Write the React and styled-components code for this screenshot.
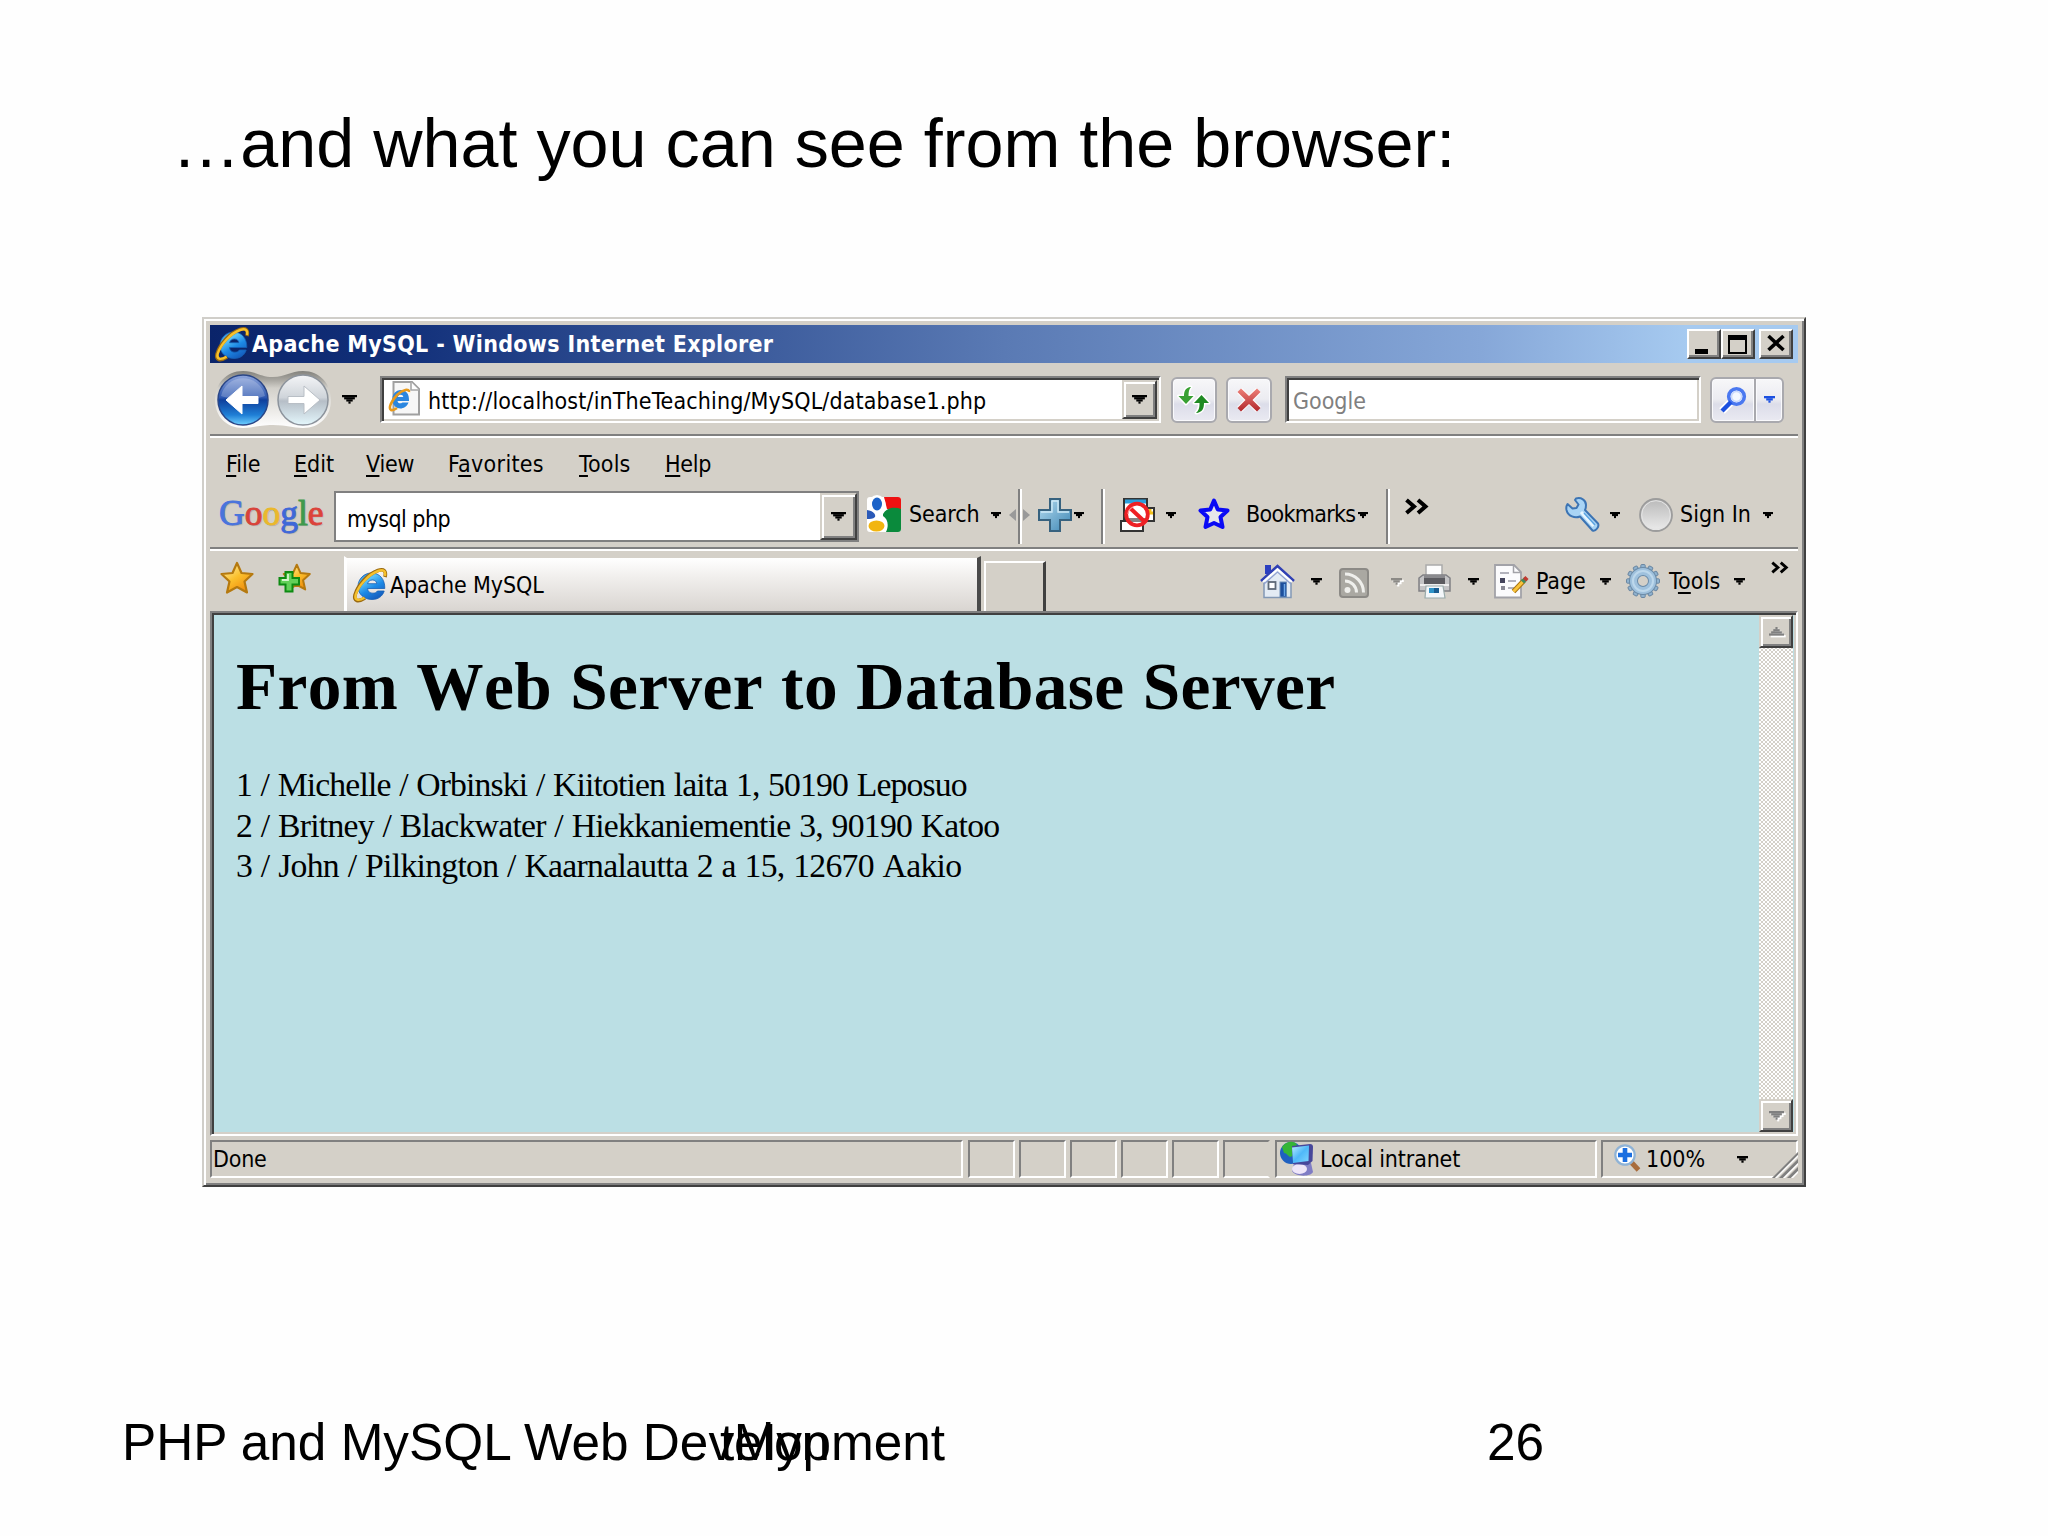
import React from "react";
import styled, { createGlobalStyle, css } from "styled-components";

const face = "#d4d0c8";
const shadow = "#808080";
const dark = "#404040";

const Global = createGlobalStyle`
  *, *::before, *::after { box-sizing: border-box; }
  body { margin: 0; background: #fff; color: #000; }
`;

/* ---------- slide ---------- */

const Slide = styled.div`
  display: flex;
  flex-direction: column;
  width: 2048px;
  height: 1536px;
  overflow: hidden;
  background: #fefefe;
`;

const SlideTitle = styled.h2`
  flex: none;
  height: 317px;
  margin: 0;
  padding: 103px 0 0 172px;
  font: 400 68.3px/80px "Liberation Sans", Arial, sans-serif;
  white-space: nowrap;
`;

const SlideFooter = styled.footer`
  display: flex;
  margin-top: 226px;
  padding-left: 122px;
  font: 51.3px/60px "Liberation Sans", Arial, sans-serif;
  white-space: nowrap;
`;

const FooterSlot = styled.span`
  flex: none;
  width: ${(p) => p.$w}px;
  letter-spacing: ${(p) => p.$ls || 0}px;
`;

/* ---------- window ---------- */

const Window = styled.section`
  flex: none;
  display: flex;
  flex-direction: column;
  width: 1604px;
  height: 870px;
  margin-left: 202px;
  padding: 6px 6px 3px;
  background: ${face};
  border: 2px solid;
  border-color: #d0cec9 ${dark} ${dark} #d0cec9;
  box-shadow: inset 2px 2px #fff, inset -2px -2px ${shadow};
  font: 23px/27px "DejaVu Sans Condensed", "DejaVu Sans", Tahoma, sans-serif;
`;

const Label = styled.span`
  flex: none;
  width: ${(p) => p.$w}px;
  margin-left: ${(p) => p.$ml || 0}px;
  letter-spacing: ${(p) => p.$ls || 0}px;
  white-space: nowrap;
  u {
    text-decoration-thickness: 2px;
    text-underline-offset: 3px;
    text-decoration-skip-ink: none;
  }
`;

const Svg = styled.svg`
  flex: none;
  display: block;
  margin-left: ${(p) => p.$ml || 0}px;
  margin-top: ${(p) => p.$mt || 0}px;
  overflow: visible;
`;

const raised = css`
  background: ${face};
  border: 2px solid;
  border-color: ${face} ${dark} ${dark} ${face};
  box-shadow: inset 2px 2px #fff, inset -2px -2px ${shadow};
`;

const sunken = css`
  background: #fff;
  border: 2px solid;
  border-color: ${shadow} #fff #fff ${shadow};
  box-shadow: inset 2px 2px ${dark}, inset -2px -2px ${face};
`;

const TitleBar = styled.header`
  flex: none;
  display: flex;
  align-items: center;
  height: 38px;
  padding: 0 5px 0 5px;
  background: linear-gradient(90deg, #0a246a 0%, #12307a 12%, #5a7ab4 50%, #86a7d8 80%, #a6caf0 93%);
  color: #fff;
  font-weight: 700;
`;

const Caption = styled.span`
  flex: 1;
  margin-left: 3px;
  letter-spacing: 0.32px;
  white-space: nowrap;
`;

const CaptionButton = styled.button`
  display: grid;
  place-items: center;
  width: 34px;
  height: 30px;
  margin-left: ${(p) => p.$ml || 0}px;
  padding: 0;
  background: ${face};
  border: 2px solid;
  border-color: #fff ${dark} ${dark} #fff;
  box-shadow: inset -2px -2px ${shadow};
`;

const NavRow = styled.div`
  flex: none;
  display: flex;
  align-items: center;
  height: 71px;
  padding-top: 2px;
`;

const Groove = styled.div`
  flex: none;
  height: 4px;
  background: linear-gradient(${shadow} 50%, #fff 50%);
`;

const Address = styled.div`
  ${sunken}
  display: flex;
  align-items: center;
  width: 781px;
  height: 47px;
  margin-left: 23px;
  padding: 2px;
`;

const UrlText = styled(Label)`
  flex: 1;
  padding-top: 3px;
`;

const DropButton = styled.button`
  ${raised}
  flex: none;
  display: grid;
  place-items: center;
  width: ${(p) => p.$w}px;
  height: ${(p) => p.$h}px;
  margin-left: auto;
  padding: 0;
`;

const GlassButton = styled.button`
  flex: none;
  display: grid;
  place-items: center;
  width: ${(p) => p.$w}px;
  height: 46px;
  margin-left: ${(p) => p.$ml || 0}px;
  padding: 0;
  border: 2px solid #a9a9ae;
  border-radius: ${(p) => p.$r || "6px"};
  background: linear-gradient(#f7f7f9 0%, #ececf1 48%, #dcdde9 60%, #eaeaf2 100%);
  box-shadow: inset 0 0 0 1px #fafafd;
`;

const SearchField = styled.div`
  ${sunken}
  display: flex;
  align-items: center;
  width: 416px;
  height: 47px;
  margin-left: 13px;
  padding: 3px 0 0 6px;
  color: #808080;
`;

const MenuRow = styled.nav`
  flex: none;
  display: flex;
  align-items: center;
  height: 53px;
`;

const ToolRow = styled.div`
  flex: none;
  display: flex;
  align-items: center;
  height: 56px;
  padding-bottom: 9px;
`;

const GoogleWord = styled.div`
  flex: none;
  width: 104px;
  height: 36px;
  margin: -7px 0 0 9px;
  font: 35.5px/40px "Liberation Serif", serif;
  text-shadow: 1px 1px 1px #aaa;
  -webkit-text-stroke: 0.9px;
  white-space: nowrap;
`;

const Tint = styled.span`
  color: ${(p) => p.$c};
`;

const Combo = styled.div`
  flex: none;
  align-self: flex-start;
  display: flex;
  align-items: center;
  width: 525px;
  height: 51px;
  margin-left: 11px;
  background: #fff;
  border: 2px solid ${shadow};
`;

const ComboText = styled(Label)`
  padding-top: 6px;
`;

const Divider = styled.i`
  flex: none;
  width: 4px;
  height: 55px;
  margin: 8px 0 4px ${(p) => p.$ml}px;
  background: linear-gradient(90deg, ${shadow} 50%, #fff 50%);
`;

const Splitter = styled.div`
  flex: none;
  display: flex;
  align-items: center;
  width: 20px;
  margin-left: 8px;
`;

const TabRow = styled.div`
  flex: none;
  display: flex;
  align-items: center;
  height: 60px;
`;

const Tab = styled.div`
  flex: none;
  align-self: flex-end;
  display: flex;
  align-items: center;
  width: 637px;
  height: 55px;
  margin-left: 32px;
  padding: 1px 0 0 6px;
  border: solid;
  border-width: 2px 4px 0 3px;
  border-color: ${face} #4a4a4a #fff #fff;
  background: linear-gradient(#fff 0%, #f1efed 35%, #d9d5d1 100%);
`;

const NewTab = styled.div`
  flex: none;
  align-self: flex-end;
  width: 62px;
  height: 50px;
  margin-left: 3px;
  border: solid;
  border-width: 2px 3px 0 2px;
  border-color: #fff ${dark} #fff #fff;
`;

/* ---------- page ---------- */

const Viewport = styled.main`
  ${sunken}
  flex: none;
  display: flex;
  height: 525px;
  padding: 2px 3px 2px 2px;
  background: #bbdee3;
`;

const Page = styled.article`
  flex: 1;
  padding: 34px 0 0 22px;
  background: #bbdfe4;
  font-family: "Liberation Serif", "Times New Roman", serif;
  font-kerning: none;
  white-space: nowrap;
`;

const Heading = styled.h1`
  margin: 0;
  font-size: 67.3px;
  line-height: 76px;
  letter-spacing: 0.4px;
  word-spacing: 0.8px;
`;

const Row = styled.p`
  margin: 0;
  font-size: 33.7px;
  line-height: 40.5px;
  letter-spacing: ${(p) => p.$ls}px;
  word-spacing: 1px;
`;

const Rows = styled.div`
  padding-top: 40px;
`;

const ScrollBar = styled.aside`
  display: flex;
  flex-direction: column;
  justify-content: space-between;
  width: 34px;
  background: conic-gradient(#fff 25%, ${face} 0 50%, #fff 0 75%, ${face} 0) 0 0 / 4px 4px;
`;

/* ---------- status bar ---------- */

const StatusBar = styled.footer`
  flex: none;
  display: flex;
  height: 46px;
  padding-top: 4px;
`;

const Panel = styled.div`
  flex: none;
  display: flex;
  align-items: center;
  width: ${(p) => p.$w}px;
  height: 38px;
  margin-left: ${(p) => p.$ml || 0}px;
  border: 2px solid;
  border-color: ${shadow} ${(p) => (p.$open ? "transparent" : "#fff")} #fff ${shadow};
`;

const Grip = styled(Svg)`
  margin: auto -2px -2px auto;
  background: ${face};
  clip-path: polygon(100% 0, 100% 100%, 0 100%);
`;

/* ---------- drawings ---------- */

function Arrow({ n = 3, w = 10, ml, color = "#000", up, lit }) {
  const rows = Array.from({ length: n }, (_, i) => i);
  const bars = (dx, fill) =>
    rows.map((i) => (
      <rect key={i + fill} x={i + dx} y={(up ? n - 1 - i : i) + dx} width={2 * (n - i) - 1} height="1.05" fill={fill} />
    ));
  return (
    <Svg $ml={ml} width={w} height={(w * n) / (2 * n - 1)} viewBox={`0 0 ${2 * n - 1} ${n}`} aria-hidden>
      {lit && bars(0.8, "#fff")}
      {bars(0, color)}
    </Svg>
  );
}

function Chevrons({ w, h, ml, mt }) {
  return (
    <Svg $ml={ml} $mt={mt} width={w} height={h} viewBox="0 0 24 15" fill="none" stroke="#000" strokeWidth="4">
      <path d="M1.500 1 L9 7.500 L1.500 14 M13 1 L20.500 7.500 L13 14" />
    </Svg>
  );
}

function Ie({ size = 34, ml }) {
  return (
    <Svg $ml={ml} width={size} height={size} viewBox="0 0 34 34" fill="none">
      <defs>
        <linearGradient id="ieBlue" x1="0" y1="0" x2="0.6" y2="1">
          <stop offset="0" stopColor="#1b6fc8" />
          <stop offset="0.35" stopColor="#5cc4f7" />
          <stop offset="0.65" stopColor="#1d8ae6" />
          <stop offset="1" stopColor="#1560c0" />
        </linearGradient>
      </defs>
      <path
        d="M18.500 5 C26.500 5 32 11 31.800 20.500 H14.500 C15 24 17 25.200 20 25.200 C22 25.200 23.500 24.500 24.400 23 H31.200 C29.500 28.500 25 31.500 19 31.500 C11 31.500 5 26 5 18.500 C5 11 11 5 18.500 5 Z M14.600 15.700 H23.800 C23.400 13.200 22 12 19.400 12 C17 12 15.200 13.200 14.600 15.700 Z"
        fill="url(#ieBlue)"
        fillRule="evenodd"
        stroke="#155fb5"
        strokeWidth="0.8"
      />
      <path d="M32 9 C33.500 3 31 0.500 25 2.500 C15 6 5 17 2 27 C0.500 33 5 34.500 12 30" stroke="#9b6a10" strokeWidth="3.600" />
      <path d="M32 8 C33 3 30.500 1 25 3 C15.500 6.500 5.500 17.500 2.600 27 C1.500 32 5 33.500 11.500 29.800" stroke="#f6c12d" strokeWidth="2.400" />
    </Svg>
  );
}

function IePage() {
  return (
    <Svg $ml={5} $mt={-2} width="31" height="35" viewBox="0 0 31 35" fill="none">
      <path d="M4.500 1 H23 L30 8 V33.500 H4.500 Z" fill="#f7f7f7" stroke="#a0a0a0" strokeWidth="2" />
      <path d="M22 1 V9 H30" fill="#fff" stroke="#a8a8a8" strokeWidth="1.600" />
      <path
        d="M11 9 C17 8.500 20.500 13 20 20 H8.500 C9 22.500 11 23 13.500 21.500 H19.500 C17 28 10 29 6 25.500 C1 20 3 10 11 9 Z M8.800 16 H14.300 C14 13 9.500 13 8.800 16 Z"
        fill="#2a86e0"
        fillRule="evenodd"
      />
      <path d="M20 11 C20.500 7.500 14 8 8 14 C2.500 20 -1 27 2 29 C3.500 29.500 6 28.500 8 27" stroke="#e89a1c" strokeWidth="2.600" />
    </Svg>
  );
}

function TravelButtons() {
  return (
    <Svg $ml={2} width="122" height="62" viewBox="0 0 122 62">
      <defs>
        <linearGradient id="back" x1="0" y1="0" x2="0" y2="1">
          <stop offset="0" stopColor="#8fa6dc" />
          <stop offset="0.45" stopColor="#2c57b0" />
          <stop offset="0.5" stopColor="#0f3f9c" />
          <stop offset="0.8" stopColor="#1f7fd6" />
          <stop offset="1" stopColor="#6fd0ff" />
        </linearGradient>
        <linearGradient id="fwd" x1="0" y1="0" x2="0" y2="1">
          <stop offset="0" stopColor="#f4f5f7" />
          <stop offset="0.45" stopColor="#cfd4da" />
          <stop offset="0.52" stopColor="#b6bec7" />
          <stop offset="1" stopColor="#e4f7fc" />
        </linearGradient>
        <linearGradient id="tray" x1="0" y1="0" x2="0" y2="1">
          <stop offset="0" stopColor="#82817c" />
          <stop offset="0.16" stopColor="#a9a7a1" />
          <stop offset="0.3" stopColor="#d2d0ca" />
          <stop offset="0.6" stopColor="#e6e4e0" />
          <stop offset="1" stopColor="#fff" />
        </linearGradient>
      </defs>
      <path d="M31 2 C44 2 48 8 61 8 C74 8 78 2 91 2 C108 2 119 15 119 31 C119 47 108 59 91 59 C80 59 76 56 61 56 C46 56 42 59 31 59 C14 59 3 47 3 31 C3 15 14 2 31 2 Z" fill="url(#tray)" />
      <circle cx="31" cy="31" r="25" fill="url(#back)" stroke="#2a4687" strokeWidth="1.500" />
      <path d="M9 27 A22.500 22.500 0 0 1 53 27 C42 31 20 31 9 27 Z" fill="#fff" opacity="0.22" />
      <circle cx="91" cy="31" r="25" fill="url(#fwd)" stroke="#8c939c" strokeWidth="1.500" />
      <path d="M14 31 L30 17 V27.500 H46 V34.500 H30 V45 Z" fill="#fff" stroke="#fff" strokeWidth="1" strokeLinejoin="round" />
      <path d="M108 31 L92 17 V27.500 H76 V34.500 H92 V45 Z" fill="#fff" stroke="#b9bfc6" strokeWidth="1" strokeLinejoin="round" />
    </Svg>
  );
}

function RefreshIcon() {
  return (
    <Svg width="34" height="32" viewBox="0 0 34 32">
      <g stroke="#fff" strokeWidth="3" strokeLinejoin="round" fill="#fff">
        <path d="M13 3 C8.500 4 7 7 7 12 H1.500 L9 20 L16.500 12 H11.500 C11.500 8 12 5 14 3 Z" />
        <path d="M20 29 C25 28 27 25 27 19 H32 L24.500 11 L17 19 H22.500 C22.500 24 22 26 19 29 Z" />
      </g>
      <path d="M13 3 C8.500 4 7 7 7 12 H1.500 L9 20 L16.500 12 H11.500 C11.500 8 12 5 14 3 Z" fill="#38a032" />
      <path d="M20 29 C25 28 27 25 27 19 H32 L24.500 11 L17 19 H22.500 C22.500 24 22 26 19 29 Z" fill="#1f8a22" />
    </Svg>
  );
}

function StopIcon() {
  return (
    <Svg width="26" height="26" viewBox="0 0 26 26" fill="none">
      <defs>
        <linearGradient id="stopRed" x1="0" y1="0" x2="0" y2="1">
          <stop offset="0" stopColor="#ee8078" />
          <stop offset="1" stopColor="#b0272c" />
        </linearGradient>
      </defs>
      <path d="M3.500 3.500 L22.500 22.500 M22.500 3.500 L3.500 22.500" stroke="#fff" strokeWidth="7" />
      <path d="M1.500 5 L5 1.500 L13 9 L21 1.500 L24.500 5 L16.500 13 L24.500 21 L21 24.500 L13 17 L5 24.500 L1.500 21 L9.500 13 Z" fill="url(#stopRed)" />
    </Svg>
  );
}

function SearchIcon() {
  return (
    <Svg width="28" height="28" viewBox="0 0 28 28" fill="none">
      <path d="M12 16 L3 25" stroke="#fff" strokeWidth="8" />
      <circle cx="17.500" cy="10.500" r="7.800" fill="#f4f8ff" stroke="#4a78f0" strokeWidth="3.600" />
      <circle cx="17.500" cy="10.500" r="5" stroke="#c9d8fb" strokeWidth="1.500" />
      <path d="M12 16 L3 25" stroke="#1c50e0" strokeWidth="4.500" />
    </Svg>
  );
}

function GoogleTile() {
  return (
    <Svg $ml={8} width="34" height="35" viewBox="0 0 34 35">
      <rect width="34" height="35" rx="3" fill="#fff" />
      <path d="M17 0 H31 Q34 0 34 3 V12 H20 Z" fill="#ee1111" />
      <path d="M16 17 C20 10 28 10 34 12 V32 Q34 35 31 35 H19 C22 29 21 22 16 19 Z" fill="#0a8a3c" />
      <path d="M0 13 C6 14 9 17 8 20 C6 22 3 22 0 22 Z" fill="#2a59b8" />
      <ellipse cx="10" cy="7" rx="8.500" ry="9" fill="#fff" />
      <ellipse cx="10" cy="7" rx="5" ry="6.500" fill="#1c63c8" />
      <ellipse cx="9.500" cy="29" rx="8" ry="5.500" fill="#f2b50f" />
    </Svg>
  );
}

function PlusIcon() {
  return (
    <Svg $ml={9} width="34" height="34" viewBox="0 0 34 34">
      <defs>
        <linearGradient id="plus" x1="0" y1="0" x2="1" y2="1">
          <stop offset="0" stopColor="#b5dcf0" />
          <stop offset="1" stopColor="#3e86b4" />
        </linearGradient>
      </defs>
      <path d="M12 1 H22 V12 H33 V22 H22 V33 H12 V22 H1 V12 H12 Z" fill="url(#plus)" stroke="#37627f" strokeWidth="2" />
      <path d="M14 3 H20 V14 H31 M14 3 V14 H3" fill="none" stroke="#cfeaf7" strokeWidth="1.400" />
    </Svg>
  );
}

function PopupIcon() {
  return (
    <Svg $ml={15} width="35" height="35" viewBox="0 0 35 35" fill="none">
      <path d="M19 11 H34 V24 H19 Z" fill="#fff" stroke="#333" strokeWidth="2" />
      <path d="M30 12 V16 H33" stroke="#f3c11b" strokeWidth="3" />
      <path d="M1 24 H23 V34 H1 Z" fill="#fff" stroke="#333" strokeWidth="2" />
      <path d="M4 2 H27 V22 H4 Z" fill="#fff" stroke="#333" strokeWidth="2" />
      <path d="M5 4.500 H26" stroke="#2c9fdc" strokeWidth="4" />
      <circle cx="17" cy="17.500" r="10.800" fill="#fff" fillOpacity="0.4" stroke="#ee2024" strokeWidth="3.800" />
      <path d="M9.500 10.500 L24.500 24.500" stroke="#ee2024" strokeWidth="4" />
      <path d="M8 17 A9 9 0 0 1 14 9.500" stroke="#ff9c9c" strokeWidth="1.200" />
    </Svg>
  );
}

const starPath = "M17 2 L21.500 12 L32.500 13 L24.500 20.500 L27 31.500 L17 26 L7 31.500 L9.500 20.500 L1.500 13 L12.500 12 Z";

function BlueStar() {
  return (
    <Svg $ml={21} $mt={-1} width="34" height="34" viewBox="0 0 34 34">
      <path d="M17 3.500 L20.800 12.500 L30.500 13.500 L23.500 20 L25.500 30 L17 26 L8.500 30 L10.500 20 L3.500 13.500 L13.200 12.500 Z" fill="#e6e6ea" stroke="#0a0af5" strokeWidth="4" strokeLinejoin="round" />
    </Svg>
  );
}

function GoldDefs() {
  return (
    <defs>
      <linearGradient id="gold" x1="0.1" y1="0" x2="0.8" y2="1">
        <stop offset="0" stopColor="#fff0b0" />
        <stop offset="0.5" stopColor="#fbc02c" />
        <stop offset="1" stopColor="#ee8508" />
      </linearGradient>
    </defs>
  );
}

function FavStar() {
  return (
    <Svg $ml={10} $mt={-6} width="34" height="34" viewBox="0 0 34 34">
      <GoldDefs />
      <path d={starPath} fill="url(#gold)" stroke="#b5790f" strokeWidth="2.200" strokeLinejoin="round" />
    </Svg>
  );
}

function FavAdd() {
  return (
    <Svg $ml={24} $mt={-4} width="34" height="34" viewBox="0 0 34 34">
      <g transform="translate(4.500 1) scale(0.84)">
        <path d={starPath} fill="url(#gold)" stroke="#b5790f" strokeWidth="2.400" strokeLinejoin="round" />
      </g>
      <path d="M7.500 10 H14.500 V16 H21 V22.500 H14.500 V29.500 H7.500 V22.500 H1.500 V16 H7.500 Z" fill="#62d058" stroke="#0d8a12" strokeWidth="2" />
      <path d="M10 12 V18 H4" fill="none" stroke="#d4f5cc" strokeWidth="1.800" />
    </Svg>
  );
}

function HomeIcon() {
  return (
    <Svg $ml={214} width="35" height="35" viewBox="0 0 35 35">
      <path d="M5 1 H11 V10 H5 Z" fill="#2c3fc0" />
      <path d="M4 16 L17.500 4 L31 16 V33.500 H4 Z" fill="#e3ebf4" stroke="#8298b5" strokeWidth="1.500" />
      <path d="M1 17 L17.500 2 L34 17" fill="none" stroke="#3040b4" strokeWidth="2.600" />
      <path d="M3 18 L17.500 5 L32 18" fill="none" stroke="#fff" strokeWidth="2" />
      <path d="M4 20 L17.500 8 L31 20" fill="none" stroke="#8fa0d0" strokeWidth="1.200" />
      <rect x="8.500" y="18" width="7" height="7" fill="#fff" stroke="#5f6a78" strokeWidth="1.800" />
      <rect x="20" y="18" width="6.500" height="15" fill="#1d4f9c" stroke="#6f8fb8" />
      <path d="M24.500 20 V32" stroke="#6fa8e8" strokeWidth="1.500" />
    </Svg>
  );
}

function RssIcon() {
  return (
    <Svg $ml={17} $mt={3} width="30" height="30" viewBox="0 0 30 30" fill="none">
      <rect x="1" y="1" width="28" height="28" rx="3" fill="#aaa8a2" stroke="#8c8a86" strokeWidth="2" />
      <circle cx="8.500" cy="22" r="3" fill="#efefec" />
      <path d="M6 13 A11.500 11.500 0 0 1 17.500 24.500 M6 6 A18.500 18.500 0 0 1 24.500 24.500" stroke="#efefec" strokeWidth="3" />
    </Svg>
  );
}

function PrinterIcon() {
  return (
    <Svg $ml={15} width="35" height="35" viewBox="0 0 35 35">
      <path d="M9 1 H25 V14 H9 Z" fill="#fdfdfd" stroke="#aaa" strokeWidth="1.500" />
      <path d="M2 14 L6 11 H29 L33 14 V27 H2 Z" fill="#c4c4c6" stroke="#808084" strokeWidth="1.500" />
      <path d="M7 11 H28 V20 H7 Z" fill="#5b5b60" />
      <path d="M7 11 H28 V14 H7 Z" fill="#8a8a8e" />
      <path d="M3 21 H32" stroke="#eee" strokeWidth="2" />
      <path d="M9 22 H26 L28 34 H8 Z" fill="#f3f7fa" stroke="#9aa" strokeWidth="1.200" />
      <path d="M12 24 H22 V29 H12 Z" fill="#2e93c8" />
      <path d="M17 24 H22 V29 H17 Z" fill="#1a5c90" />
    </Svg>
  );
}

function PageIcon() {
  return (
    <Svg $ml={15} width="34" height="35" viewBox="0 0 34 35" fill="none">
      <path d="M1 1 H20 L27 8 V33.500 H1 Z" fill="#fbfbfd" stroke="#a2a2a8" strokeWidth="1.800" />
      <path d="M19.500 1 V8.500 H27" stroke="#a2a2a8" strokeWidth="1.500" />
      <path d="M6 9 H15" stroke="#9a9aa6" strokeWidth="1.500" />
      <rect x="6" y="14" width="5" height="5" fill="#44445c" />
      <rect x="7" y="22" width="4" height="4" fill="#8a8a96" />
      <path d="M14 17 H22 M14 24 H20" stroke="#9a9aa6" strokeWidth="1.500" />
      <path d="M19.500 27.500 L30 16.500" stroke="#a9740e" strokeWidth="5" />
      <path d="M19.500 27.500 L30 16.500" stroke="#f9c33a" strokeWidth="3" />
      <path d="M28.500 18 L32 14.500" stroke="#3f8a60" strokeWidth="4.500" />
      <path d="M30.500 16 L33 13.500" stroke="#c03a30" strokeWidth="4.500" />
    </Svg>
  );
}

function GearIcon() {
  const teeth = Array.from({ length: 12 }, (_, i) => i * 30);
  return (
    <Svg $ml={15} width="34" height="34" viewBox="0 0 34 34">
      {teeth.map((a) => (
        <rect key={a} x="14.800" y="0.500" width="4.400" height="7" rx="1" fill="#8fb2cf" stroke="#6b87a2" strokeWidth="1" transform={`rotate(${a} 17 17)`} />
      ))}
      <circle cx="17" cy="17" r="9.500" fill="none" stroke="#6b8ba8" strokeWidth="9" />
      <circle cx="17" cy="17" r="9.500" fill="none" stroke="#9fc1dd" strokeWidth="7" />
      <circle cx="17" cy="17" r="10" fill="none" stroke="#bdd8ec" strokeWidth="2" />
    </Svg>
  );
}

function WrenchIcon() {
  return (
    <Svg $ml={136} width="36" height="36" viewBox="0 0 36 36">
      <path
        d="M11 1.500 C16 0 21 3 21 8 C21 10 20.500 12 20 13 L33 26.500 C34.500 29.500 31 34.500 27.500 33.500 L15 19.500 C10 21.500 3 19.500 1.500 13 C1 10.500 1.500 8.500 2.500 7 L7.500 11.500 L11.500 11 L13.500 7.500 L10 3 Z"
        fill="#a9d4f5"
        stroke="#3c74b4"
        strokeWidth="2"
        strokeLinejoin="round"
      />
      <path d="M16 15 L28.500 29" stroke="#e8f6ff" strokeWidth="3" />
      <path d="M19 16 L30 28" stroke="#5ba3e0" strokeWidth="1.500" />
    </Svg>
  );
}

function UserOrb() {
  return (
    <Svg $ml={19} width="34" height="34" viewBox="0 0 34 34">
      <defs>
        <linearGradient id="orb" x1="0" y1="0" x2="0" y2="1">
          <stop offset="0" stopColor="#b9b9b9" />
          <stop offset="1" stopColor="#ececec" />
        </linearGradient>
      </defs>
      <circle cx="17" cy="17" r="16" fill="url(#orb)" stroke="#9c9c9c" strokeWidth="1.800" />
      <circle cx="17" cy="17" r="14.300" fill="none" stroke="#e4e4e4" strokeWidth="1" />
    </Svg>
  );
}

function IntranetIcon() {
  return (
    <Svg $ml={2} width="35" height="36" viewBox="0 0 35 36">
      <defs>
        <linearGradient id="screen" x1="0" y1="0" x2="1" y2="1">
          <stop offset="0" stopColor="#b9ecff" />
          <stop offset="0.5" stopColor="#4fb8f8" />
          <stop offset="1" stopColor="#7fd6ff" />
        </linearGradient>
      </defs>
      <circle cx="12" cy="12" r="11" fill="#1f60c0" />
      <path d="M3 6 C8 -1 16 0 18 4 C15 8 13 10 14 14 C10 19 9 12 5 12 Z" fill="#35b537" />
      <path d="M15 22 H32 L34 31 C32 36 16 36 13 30 Z" fill="#7f7cc4" />
      <ellipse cx="20.500" cy="28" rx="7.500" ry="5" fill="#efe6f8" />
      <path d="M13 5 L31 3 Q34 3 34 6 L33.500 20 L29 24 L14 23 Z" fill="#47479a" />
      <path d="M13 6.500 L30 4.500 L29.500 20 L14 22 Z" fill="url(#screen)" />
    </Svg>
  );
}

function ZoomIcon() {
  return (
    <Svg $ml={11} $mt={-3} width="27" height="28" viewBox="0 0 27 28" fill="none">
      <path d="M17.500 18.500 L24.500 26" stroke="#a86c3c" strokeWidth="5" />
      <circle cx="11" cy="11" r="9.700" fill="#fff" stroke="#8fb3d6" strokeWidth="2.200" />
      <path d="M11 4 V18 M4 11 H18" stroke="#1c6fe0" strokeWidth="4.600" />
    </Svg>
  );
}

/* ---------- data ---------- */

const menus = [
  [16, 35, <><u>F</u>ile</>, 0],
  [33, 39, <><u>E</u>dit</>, 0],
  [33, 50, <><u>V</u>iew</>, -0.2],
  [32, 97, <>F<u>a</u>vorites</>, 0.3],
  [34, 55, <><u>T</u>ools</>, 0.2],
  [31, 50, <><u>H</u>elp</>, -0.3],
];

const records = [
  ["1 / Michelle / Orbinski / Kiitotien laita 1, 50190 Leposuo", -0.85],
  ["2 / Britney / Blackwater / Hiekkaniementie 3, 90190 Katoo", -0.75],
  ["3 / John / Pilkington / Kaarnalautta 2 a 15, 12670 Aakio", -0.71],
];

export default function App() {
  return (
    <Slide>
      <Global />
      <SlideTitle>…and what you can see from the browser:</SlideTitle>

      <Window>
        <TitleBar>
          <Ie />
          <Caption>Apache MySQL - Windows Internet Explorer</Caption>
          <CaptionButton>
            <Svg $ml={-5} $mt={15} width="13" height="5" viewBox="0 0 13 5"><rect width="13" height="5" /></Svg>
          </CaptionButton>
          <CaptionButton>
            <Svg $ml={-2} width="19" height="19" viewBox="0 0 19 19"><path d="M0 0H19V19H0Z M2 5V17H17V5Z" fillRule="evenodd" /></Svg>
          </CaptionButton>
          <CaptionButton $ml={4}>
            <Svg $mt={-2} width="18" height="16" viewBox="0 0 18 16"><path d="M1.500 1 L16.500 15 M16.500 1 L1.500 15" stroke="#000" strokeWidth="3.600" /></Svg>
          </CaptionButton>
        </TitleBar>

        <NavRow>
          <TravelButtons />
          <Arrow n={4} w={15} ml={8} />
          <Address>
            <IePage />
            <UrlText $ml={8} $ls={0.14}>http://localhost/inTheTeaching/MySQL/database1.php</UrlText>
            <DropButton $w={35} $h={39}><Arrow n={4} w={15} /></DropButton>
          </Address>
          <GlassButton $w={46} $ml={10}><RefreshIcon /></GlassButton>
          <GlassButton $w={46} $ml={9}><StopIcon /></GlassButton>
          <SearchField><Label>Google</Label></SearchField>
          <GlassButton $w={46} $ml={9} $r="6px 0 0 6px"><SearchIcon /></GlassButton>
          <GlassButton $w={30} $ml={-2} $r="0 6px 6px 0"><Arrow n={3} w={11} color="#1c50e0" /></GlassButton>
        </NavRow>
        <Groove />

        <MenuRow>
          {menus.map(([ml, w, text, ls], i) => (
            <Label key={i} $ml={ml} $w={w} $ls={ls}>{text}</Label>
          ))}
        </MenuRow>

        <ToolRow>
          <GoogleWord>
            <Tint $c="#4a74dc">G</Tint><Tint $c="#d8433a">o</Tint><Tint $c="#eab82c">o</Tint>
            <Tint $c="#3f68d8">g</Tint><Tint $c="#3f9a4c">l</Tint><Tint $c="#dc433a">e</Tint>
          </GoogleWord>
          <Combo>
            <ComboText $ml={11} $ls={-0.55}>mysql php</ComboText>
            <DropButton $w={37} $h={47}><Arrow n={4} w={15} /></DropButton>
          </Combo>
          <GoogleTile />
          <Label $ml={8} $w={71} $ls={-0.1}>Search</Label>
          <Arrow ml={11} />
          <Splitter>
            <Svg width="7" height="12" viewBox="0 0 7 12"><path d="M7 0 V12 L0 6 Z" fill="#999" /></Svg>
            <Divider $ml={2} />
            <Svg $ml={1} width="7" height="12" viewBox="0 0 7 12"><path d="M0 0 V12 L7 6 Z" fill="#999" /></Svg>
          </Splitter>
          <PlusIcon />
          <Arrow ml={2} />
          <Divider $ml={17} />
          <PopupIcon />
          <Arrow ml={11} />
          <BlueStar />
          <Label $ml={15} $w={112} $ls={-0.7}>Bookmarks</Label>
          <Arrow ml={0} />
          <Divider $ml={18} />
          <Chevrons ml={15} mt={-16} w={24} h={15} />
          <WrenchIcon />
          <Arrow ml={9} />
          <UserOrb />
          <Label $ml={7} $w={73}>Sign In</Label>
          <Arrow ml={10} />
        </ToolRow>
        <Groove />

        <TabRow>
          <FavStar />
          <FavAdd />
          <Tab>
            <Ie />
            <Label $ml={3} $ls={-0.1}>Apache MySQL</Label>
          </Tab>
          <NewTab />
          <HomeIcon />
          <Arrow w={11} ml={16} />
          <RssIcon />
          <Arrow w={11} ml={22} color="#8c8a86" lit />
          <PrinterIcon />
          <Arrow w={11} ml={16} />
          <PageIcon />
          <Label $ml={8} $w={54} $ls={-0.1}><u>P</u>age</Label>
          <Arrow w={11} ml={10} />
          <GearIcon />
          <Label $ml={9} $w={54} $ls={0.2}>T<u>o</u>ols</Label>
          <Arrow w={11} ml={11} />
          <Chevrons ml={26} mt={-28} w={18} h={11} />
        </TabRow>

        <Viewport>
          <Page>
            <Heading>From Web Server to Database Server</Heading>
            <Rows>
              {records.map(([text, ls]) => (
                <Row key={text} $ls={ls}>{text}</Row>
              ))}
            </Rows>
          </Page>
          <ScrollBar>
            <DropButton $w={34} $h={33}><Arrow n={4} w={15} color={shadow} up lit /></DropButton>
            <DropButton $w={34} $h={33}><Arrow n={4} w={15} color={shadow} lit /></DropButton>
          </ScrollBar>
        </Viewport>

        <StatusBar>
          <Panel $w={753}><Label $ml={1} $ls={-0.2}>Done</Label></Panel>
          {[0, 1, 2, 3, 4, 5].map((i) => (
            <Panel key={i} $w={47} $ml={i ? 4 : 5} $open={i === 5} />
          ))}
          <Panel $w={322} $ml={5}>
            <IntranetIcon />
            <Label $ml={6} $ls={-0.15}>Local intranet</Label>
          </Panel>
          <Panel $w={197} $ml={4}>
            <ZoomIcon />
            <Label $ml={5} $w={64} $ls={0}>100%</Label>
            <Arrow w={11} ml={27} />
            <Grip width="26" height="26" viewBox="0 0 26 26" stroke={shadow} strokeWidth="3">
              <path d="M0 27 L27 0 M8 27 L27 8 M16 27 L27 16" />
              <path d="M3 27 L27 3 M11 27 L27 11 M19 27 L27 19" stroke="#fff" strokeWidth="1.500" />
            </Grip>
          </Panel>
        </StatusBar>
      </Window>

      <SlideFooter>
        <FooterSlot $w={598}>PHP and MySQL Web Development</FooterSlot>
        <FooterSlot $w={767} $ls={-0.4}>tMyn</FooterSlot>
        <FooterSlot>26</FooterSlot>
      </SlideFooter>
    </Slide>
  );
}
